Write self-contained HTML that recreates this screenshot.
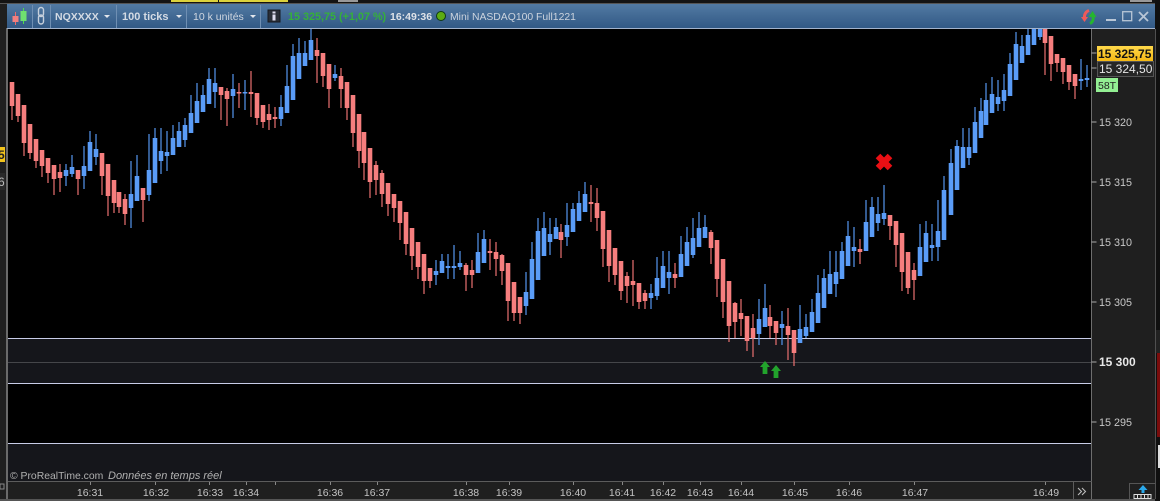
<!DOCTYPE html>
<html><head><meta charset="utf-8"><style>
html,body{margin:0;padding:0;background:#1e1e1e;width:1160px;height:501px;overflow:hidden}
svg{display:block}
text{font-family:"Liberation Sans",sans-serif;font-size:10.5px;fill:#c4c4c4}
</style></head><body>
<svg width="1160" height="501" viewBox="0 0 1160 501" xmlns="http://www.w3.org/2000/svg">
<defs>
<linearGradient id="tb" x1="0" y1="0" x2="0" y2="1"><stop offset="0" stop-color="#527aa3"/><stop offset="1" stop-color="#325985"/></linearGradient>
<linearGradient id="yl" x1="0" y1="0" x2="0" y2="1"><stop offset="0" stop-color="#ffd84a"/><stop offset="1" stop-color="#f5b914"/></linearGradient>
<clipPath id="ch"><rect x="8" y="29" width="1083" height="452"/></clipPath>
<clipPath id="lf"><rect x="0" y="0" width="5" height="501"/></clipPath>
</defs>
<rect width="1160" height="501" fill="#1f1f1f"/>
<!-- top strip -->
<rect x="0" y="0" width="1160" height="3" fill="#141414"/>
<rect x="171" y="0" width="47" height="2" fill="#dcd23c"/><rect x="219" y="0" width="69" height="2" fill="#dcd23c"/>
<rect x="338" y="0" width="20" height="2" fill="#999"/><rect x="1130" y="0" width="22" height="2" fill="#999"/>
<rect x="0" y="3" width="1160" height="1" fill="#555"/>
<!-- chart -->
<rect x="8" y="29" width="1083" height="452" fill="#000"/>
<rect x="8" y="339" width="1083" height="44" fill="#15161b"/>
<rect x="8" y="443" width="1083" height="38" fill="#15161b"/>
<rect x="8" y="338" width="1083" height="1" fill="#c8cde8"/>
<rect x="8" y="383" width="1083" height="1" fill="#c8cde8"/>
<rect x="8" y="443" width="1083" height="1" fill="#c8cde8"/>
<rect x="8" y="362" width="1083" height="1" fill="#45464a"/>
<!-- left -->
<rect x="6" y="28" width="2" height="473" fill="#6a6a6a"/>
<rect x="0" y="147" width="5" height="15" fill="#f3c41c"/>
<rect x="0" y="173" width="5" height="17" fill="#2a2a2a"/>
<!-- candles -->
<g clip-path="url(#ch)" fill="none">
<path stroke="#ea7070" stroke-width="1.2" d="M12 82V120M18 94V122M24 105V156M30 124V159M36 139V168M42 150V177M48 158V183M54 165V195M60 164V192M78 170V195M102 153V195M108 164V216M114 180V213M119 192V213M125 194V225M143 188V222M221 87V120M227 88V126M239 83V108M251 71V117M257 93V125M263 105V128M269 104V130M275 107V128M317 38V83M323 53V87M329 64V108M341 68V108M347 82V120M353 95V147M359 114V168M364 132V180M370 148V198M376 161V195M382 170V207M388 183V216M394 194V222M400 201V240M406 212V255M412 228V270M418 242V279M424 254V294M430 268V288M466 263V291M472 260V288M490 239V270M496 242V276M502 254V285M508 263V321M514 282V321M520 297V324M561 224V258M591 185V222M597 188V231M603 211V267M609 230V282M615 248V285M621 261V300M627 272V303M633 260V306M639 283V309M645 290V309M675 263V288M711 230V264M717 240V297M723 259V318M729 281V342M735 302V338M741 299V336M747 316V351M753 314V357M770 305V338M776 321V345M788 308V360M794 330V366M860 239V264M890 215V240M896 221V267M902 233V291M908 252V294M914 263V300M1045 28V75M1051 36V81M1057 54V72M1063 58V84M1069 65V90M1075 74V99"/>
<path stroke="#f67e7e" stroke-width="4.600" d="M12 82V106M18 94V116M24 105V143M30 124V153M36 139V161M42 150V166M48 158V173M54 165V179M60 172V178M78 170V179M102 153V176M108 164V196M114 180V203M119 192V207M125 199V214M143 188V200M221 87V95M227 91V99M239 92V93.500M251 92V94M257 93V118M263 105V122M269 114V120M275 117V119M317 50V56M323 53V76M329 64V89M341 76V89M347 82V108M353 95V133M359 114V151M364 132V163M370 148V182M376 165V180M382 173V194M388 183V204M394 194V208M400 201V223M406 212V244M412 228V256M418 242V267M424 254V281M430 268V281M466 265V275M472 270V275M490 251V253M496 252V259M502 255V271M508 263V301M514 282V313M520 297V313M561 232V240M591 202V204M597 203V218M603 211V249M609 230V266M615 248V275M621 261V291M627 276V286M633 281V285M639 283V302M645 293V301M675 274V278M711 232V248M717 240V279M723 259V302M729 281V326M735 303V322M741 313V319M747 316V341M753 328V338M770 317V326M776 321V333M788 326V335M794 330V353M860 249V252M890 215V226M896 221V245M902 233V272M908 252V288M914 270V280M1045 28V43M1051 36V64M1057 54V63M1063 58V72M1069 65V82M1075 74V86"/>
<path stroke="#5596ee" stroke-width="1.200" d="M66 164V186M72 155V177M84 146V189M90 131V171M96 134V165M131 161V228M137 155V201M149 134V201M155 128V183M161 128V174M167 131V171M173 125V155M179 122V147M185 118V147M191 95V133M197 83V123M203 85V112M209 68V104M215 68V108M233 74V118M245 80V110M281 95V126M287 65V113M293 44V100M299 38V79M305 41V66M311 29V60M335 65V81M436 260V285M442 254V273M448 254V279M454 245V279M460 251V270M478 233V273M484 230V263M526 272V315M532 242V299M538 218V280M544 212V256M550 218V255M556 218V239M567 203V246M573 203V232M579 191V221M585 182V212M651 284V309M657 257V300M663 251V288M669 251V294M681 236V277M687 227V266M693 218V258M699 212V247M705 215V238M759 299V345M765 284V327M782 311V345M800 305V343M806 314V338M812 299V332M818 275V323M824 269V308M830 251V294M836 251V297M842 242V279M848 221V266M854 227V267M866 200V251M872 197V237M878 197V231M884 185V225M920 224V276M926 221V262M932 224V261M938 200V261M944 176V240M951 149V215M957 140V190M963 128V168M969 128V165M975 107V153M981 98V138M986 83V125M992 77V113M998 80V111M1004 74V111M1010 53V96M1016 32V80M1022 35V63M1028 28V55M1034 28V45M1040 28V40M1081 59V90M1087 65V87"/>
<path stroke="#5a9cf7" stroke-width="4.600" d="M66 170V176M72 167V174M84 166V176M90 142V171M96 149V157M131 194V208M137 176V201M149 170V195M155 138V183M161 151V161M167 152V156M173 138V155M179 131V147M185 125V140M191 113V133M197 101V123M203 95V112M209 79V104M215 83V92M233 89V96M245 92V93.500M281 107V119M287 86V113M293 56V100M299 53V79M305 53V66M311 40V60M335 74V78M436 271V275M442 261V273M448 266V268M454 266V268M460 263V267M478 252V273M484 239V263M526 292V306M532 259V299M538 231V280M544 228V256M550 234V242M556 227V239M567 225V237M573 209V232M579 203V221M585 194V212M651 293V298M657 278V296M663 266V288M669 272V278M681 254V277M687 242V266M693 238V255M699 228V247M705 227V238M759 319V334M765 308V327M782 324V328M800 329V343M806 327V336M812 312V332M818 293V323M824 278V308M830 274V294M836 272V284M842 251V279M848 236V266M854 247V251M866 222V251M872 207V237M878 214V223M884 213V219M920 247V276M926 233V262M932 245V248M938 231V247M944 190V240M951 163V215M957 146V190M963 147V168M969 147V158M975 122V153M981 111V138M986 100V125M992 94V113M998 97V104M1004 90V101M1010 64V96M1016 44V80M1022 46V63M1028 35V55M1034 28V45M1040 28V37M1081 79V81M1087 78V80"/>
</g>
<!-- markers -->
<path d="M765 361l5 6h-2.600v7h-4.800v-7H760z" fill="#22a32c"/>
<path d="M776 365l5 6h-2.600v7h-4.800v-7H771z" fill="#22a32c"/>
<path d="M878 156L890 168M890 156L878 168" stroke="#ea0f14" stroke-width="6.500" fill="none"/>
<!-- title bar -->
<rect x="7" y="4" width="1148" height="24" fill="url(#tb)"/>
<rect x="7" y="28" width="1148" height="1" fill="#a3b3cc"/>
<rect x="32" y="5" width="1" height="23" fill="#6f8fb3"/><rect x="50" y="5" width="1" height="23" fill="#6f8fb3"/>
<rect x="116" y="5" width="1" height="23" fill="#6f8fb3"/><rect x="186" y="5" width="1" height="23" fill="#6f8fb3"/>
<rect x="260" y="5" width="1" height="23" fill="#6f8fb3"/>
<!-- candle icon -->
<path d="M15.500 12v13" stroke="#ee6a6a" fill="none"/><rect x="12.500" y="16" width="6" height="6" fill="#f27f7f"/>
<path d="M23.500 8v16" stroke="#4fdc4f" fill="none"/><rect x="20.500" y="11" width="6" height="10" fill="#6fe06f"/>
<!-- chain icon -->
<g fill="none" stroke="#c6d0dc" stroke-width="1.400"><rect x="38.500" y="7.500" width="5" height="9" rx="2.500"/><rect x="38.500" y="15" width="5" height="9" rx="2.500"/></g>
<text x="55" y="20" font-weight="bold" style="fill:#d4dbe4;font-weight:bold">NQXXXX</text>
<path d="M104 15h6l-3 3z" fill="#e2e6ec"/>
<text x="122" y="20" style="fill:#d4dbe4;font-size:11px;font-weight:bold">100 ticks</text>
<path d="M176 15h6l-3 3z" fill="#e2e6ec"/>
<text x="193" y="20" style="fill:#d0d7e0">10 k unités</text>
<path d="M250 15h6l-3 3z" fill="#e2e6ec"/>
<rect x="268" y="10" width="12" height="12" fill="#2a2f38" stroke="#16191f"/>
<rect x="272.500" y="11.500" width="3" height="2" fill="#dde"/><rect x="272.500" y="14.500" width="3" height="6" fill="#dde"/>
<text x="288" y="20" style="fill:#35b03a;font-size:10.800px;font-weight:bold">15 325,75 (+1,07 %)</text>
<text x="390" y="20" style="fill:#dfe3e8;font-weight:bold">16:49:36</text>
<circle cx="441" cy="16" r="4.500" fill="#5cac12" stroke="#0f3a12" stroke-width="1"/>
<text x="450" y="20" style="fill:#ccd4de;font-size:10.400px">Mini NASDAQ100 Full1221</text>
<!-- refresh icon -->
<path d="M1089 10.500a6.500 6.500 0 0 0-4.500 7" fill="none" stroke="#ef5a5a" stroke-width="3"/><path d="M1081 17h7l-3.500 5z" fill="#ef5a5a"/>
<path d="M1090 23.500a6 6 0 0 0 3-7" fill="none" stroke="#25b52f" stroke-width="3"/><path d="M1088.500 17l4-6 4 6z" fill="#25b52f"/>
<rect x="1106" y="19" width="10" height="2" fill="#b8c6d6"/>
<rect x="1122.700" y="11.700" width="9" height="9" fill="none" stroke="#b8c6d6" stroke-width="1.300"/>
<path d="M1139 12l9 9M1148 12l-9 9" stroke="#b8c6d6" stroke-width="1.800" fill="none"/>
<!-- right axis -->
<rect x="1091" y="29" width="1" height="470" fill="#6e6e6e"/>
<rect x="1155" y="0" width="5" height="501" fill="#101010"/>
<rect x="1155" y="29" width="1" height="470" fill="#505050"/>
<rect x="1156" y="330" width="4" height="23" fill="#222"/>
<rect x="1157" y="353" width="3" height="84" fill="#7a0c0c"/>
<rect x="1158" y="445" width="2" height="23" fill="#ddd"/>
<path d="M1091.500 53h5M1091.500 68h5M1091.500 122h5M1091.500 182h5M1091.500 242h5M1091.500 302h5M1091.500 362h5M1091.500 422h5" stroke="#aaa" fill="none"/>
<rect x="1097" y="46" width="56" height="15" fill="url(#yl)"/>
<text x="1098" y="58" style="fill:#111;font-size:12px;font-weight:bold">15 325,75</text>
<rect x="1097.500" y="61.500" width="56" height="15" fill="#262626" stroke="#555"/>
<text x="1099" y="73" style="fill:#e6e6e6;font-size:12px">15 324,50</text>
<rect x="1096" y="78" width="22" height="14" fill="#93ef93"/>
<text x="1098" y="89" style="fill:#222">58T</text>
<g style="font-size:10.800px">
<text x="1099" y="126" style="fill:#c8c8c8;font-size:10.800px">15 320</text>
<text x="1099" y="186" style="fill:#c8c8c8;font-size:10.800px">15 315</text>
<text x="1099" y="246" style="fill:#c8c8c8;font-size:10.800px">15 310</text>
<text x="1099" y="306" style="fill:#c8c8c8;font-size:10.800px">15 305</text>
<text x="1099" y="366" style="fill:#e8e8e8;font-size:12px;font-weight:bold">15 300</text>
<text x="1099" y="426" style="fill:#c8c8c8;font-size:10.800px">15 295</text>
</g>
<!-- time axis -->
<rect x="8" y="481" width="1084" height="1" fill="#5c5c5c"/>
<rect x="0" y="499" width="1155" height="2" fill="#555"/>
<path d="M90.500 482v3M155.500 482v3M209.500 482v3M246.500 482v3M275.500 482v3M330.500 482v3M377.500 482v3M466.500 482v3M509.500 482v3M573.500 482v3M622.500 482v3M663.500 482v3M700.500 482v3M741.500 482v3M794.500 482v3M849.500 482v3M914.500 482v3M1045.500 482v3" stroke="#888" fill="none"/>
<g text-anchor="middle">
<text x="90" y="496">16:31</text><text x="156" y="496">16:32</text><text x="210" y="496">16:33</text><text x="246" y="496">16:34</text>
<text x="330" y="496">16:36</text><text x="377" y="496">16:37</text><text x="466" y="496">16:38</text><text x="509" y="496">16:39</text>
<text x="573" y="496">16:40</text><text x="622" y="496">16:41</text><text x="663" y="496">16:42</text><text x="700" y="496">16:43</text>
<text x="741" y="496">16:44</text><text x="795" y="496">16:45</text><text x="849" y="496">16:46</text><text x="915" y="496">16:47</text>
<text x="1046" y="496">16:49</text>
</g>
<rect x="1073" y="482" width="1" height="17" fill="#5c5c5c"/>
<path d="M1078 488l3.500 3.500-3.500 3.500M1082 488l3.500 3.500-3.500 3.500" stroke="#bbb" fill="none" stroke-width="1.100"/>
<path d="M1129.500 499v-15.500h26" stroke="#555" fill="none"/>
<path d="M1143 485l4.500 5h-3v3h-3v-3h-3z" fill="#2aa8ea"/>
<rect x="1134" y="494.500" width="17" height="4" fill="none" stroke="#ddd"/>
<path d="M1137.500 494v5M1141 494v5M1144.500 494v5M1148 494v5" stroke="#ddd" fill="none"/>
<!-- footer -->
<text x="10" y="479" style="fill:#b0b0b0;font-size:10.400px">© ProRealTime.com</text>
<text x="108" y="479" style="fill:#b0b0b0;font-size:11px;font-style:italic">Données en temps réel</text>
<!-- left fragments -->
<g clip-path="url(#lf)">
<text x="-2" y="159" style="fill:#222;font-size:12px;font-weight:bold">5</text>
<text x="-2" y="186" style="fill:#bbb;font-size:12px">6</text>
</g>
<rect x="0" y="484" width="4" height="5" fill="none" stroke="#888"/>
</svg>
</body></html>
